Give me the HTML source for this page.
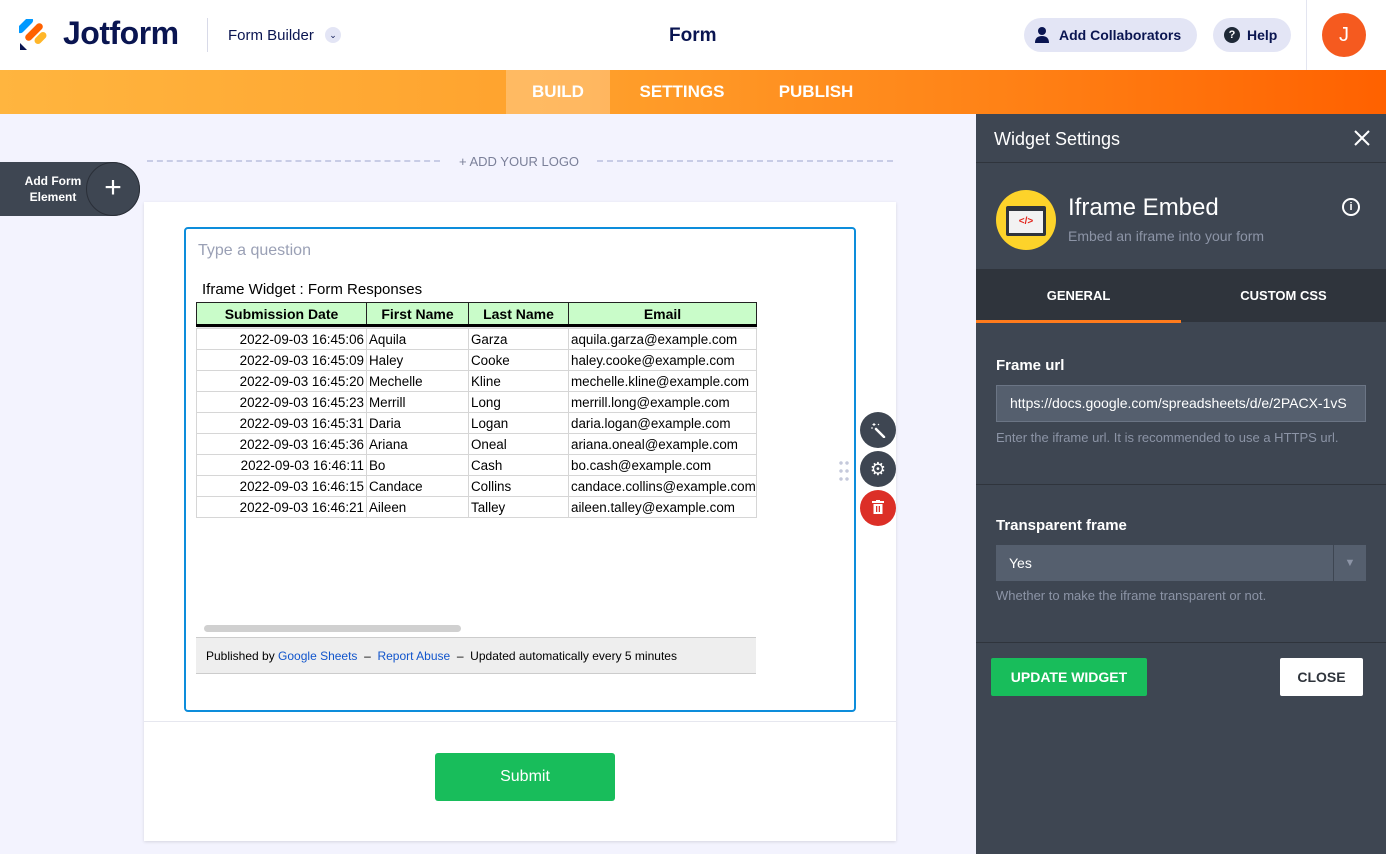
<!DOCTYPE html>
<html><head><meta charset="utf-8"><style>
*{box-sizing:border-box;margin:0;padding:0}
body{width:1386px;height:854px;overflow:hidden;font-family:"Liberation Sans",sans-serif;background:#f3f3fe;position:relative}
.abs{position:absolute}
#top{left:0;top:0;width:1386px;height:70px;background:#fff}
#bar{left:0;top:70px;width:1386px;height:44px;background:linear-gradient(90deg,#ffb53f 0%,#ffa22d 40%,#ff7f14 75%,#ff6100 100%)}
.tab{top:70px;height:44px;line-height:44px;color:#fff;font-size:17px;font-weight:bold;text-align:center}
#panel{left:976px;top:114px;width:410px;height:740px;background:#3e4652;color:#fff}
table{border-collapse:collapse;font-size:13.4px;color:#000;table-layout:fixed}
td{border:1px solid #d6d6d6;height:21px;padding:0 2px;white-space:nowrap;overflow:hidden}
td.d{text-align:right}
th{background:#c9fcc9;border:1px solid #222;border-bottom:3px solid #000;height:23px;font-size:14px}
</style></head><body>
<div id="top" class="abs"></div>
<svg class="abs" style="left:19px;top:19px" width="30" height="32" viewBox="0 0 30 32">
<rect x="2.5" y="-4" width="7" height="20" rx="3.5" fill="#0099ff" transform="rotate(45 6 6)"/>
<rect x="11.5" y="2" width="7" height="22" rx="3.5" fill="#ff6100" transform="rotate(45 15 13)"/>
<rect x="18" y="12" width="7" height="14" rx="3.5" fill="#ffb629" transform="rotate(45 21.5 19)"/>
<path d="M1 24 L1 31 L8 31Z" fill="#0a1551"/></svg>
<div class="abs" style="left:63px;top:15px;font-size:32px;font-weight:bold;color:#0a1551;letter-spacing:-0.5px">Jotform</div>
<div class="abs" style="left:207px;top:18px;width:1px;height:34px;background:#d8dae8"></div>
<div class="abs" style="left:228px;top:27px;font-size:15px;color:#0a1551">Form Builder</div>
<div class="abs" style="left:325px;top:27px;width:16px;height:16px;border-radius:50%;background:#e3e5f5;font-size:9px;text-align:center;line-height:16px;color:#0a1551">⌄</div>
<div class="abs" style="left:669px;top:25px;font-size:19px;color:#0a1551;font-weight:bold">Form</div>
<div class="abs" style="left:1024px;top:18px;width:173px;height:34px;border-radius:17px;background:#e3e5f5;color:#0a1551;font-size:14px;font-weight:bold;line-height:34px;padding-left:35px">Add Collaborators</div>
<svg class="abs" style="left:1035px;top:27px" width="14" height="16" viewBox="0 0 14 16"><circle cx="7" cy="4" r="4" fill="#0a1551"/><path d="M0 16 Q0 9 7 9 Q14 9 14 16Z" fill="#0a1551"/></svg>
<div class="abs" style="left:1213px;top:18px;width:78px;height:34px;border-radius:17px;background:#e3e5f5;color:#0a1551;font-size:14px;font-weight:bold;line-height:34px;padding-left:34px">Help</div>
<div class="abs" style="left:1224px;top:27px;width:16px;height:16px;border-radius:50%;background:#1f2937;color:#fff;font-size:11px;font-weight:bold;text-align:center;line-height:16px">?</div>
<div class="abs" style="left:1306px;top:0;width:1px;height:70px;background:#e3e5f0"></div>
<div class="abs" style="left:1322px;top:13px;width:44px;height:44px;border-radius:50%;background:#f55a1f;color:#fff;font-size:20px;text-align:center;line-height:44px">J</div>
<div id="bar" class="abs"></div>
<div class="tab abs" style="left:506px;width:104px;background:rgba(255,255,255,.25)">BUILD</div>
<div class="tab abs" style="left:626px;width:112px">SETTINGS</div>
<div class="tab abs" style="left:766px;width:100px">PUBLISH</div>

<div class="abs" style="left:0;top:162px;width:140px;height:54px;background:#3e4652;border-radius:0 27px 27px 0"></div>
<div class="abs" style="left:20px;top:173px;width:66px;color:#fff;font-size:12px;text-align:center;line-height:16px;font-weight:bold">Add Form Element</div>
<div class="abs" style="left:86px;top:162px;width:54px;height:54px;border-radius:50%;border:1px solid #2a2f38;color:#fff;font-size:30px;text-align:center;line-height:50px;font-weight:300">+</div>
<div class="abs" style="left:147px;top:160px;width:293px;border-top:2px dashed #c8cce6"></div>
<div class="abs" style="left:597px;top:160px;width:296px;border-top:2px dashed #c8cce6"></div>
<div class="abs" style="left:459px;top:154px;font-size:13px;color:#7b8099">+ ADD YOUR LOGO</div>

<div class="abs" style="left:144px;top:202px;width:752px;height:639px;background:#fff;box-shadow:0 1px 3px rgba(0,0,0,.12)"></div>
<div class="abs" style="left:144px;top:721px;width:752px;height:1px;background:#e6e7ef"></div>
<div class="abs" style="left:184px;top:227px;width:672px;height:485px;border:2px solid #0d8ddb;border-radius:4px"></div>
<div class="abs" style="left:198px;top:242px;font-size:16px;color:#9aa0b5">Type a question</div>
<div class="abs" style="left:202px;top:281px;font-size:15px;color:#000">Iframe Widget : Form Responses</div>
<table class="abs" style="left:196px;top:302px;width:560px">
<colgroup><col style="width:170px"><col style="width:102px"><col style="width:100px"><col style="width:188px"></colgroup>
<tr><th>Submission Date</th><th>First Name</th><th>Last Name</th><th>Email</th></tr>
<tr><td style="height:3px;border:0;background:#e4e4e4" colspan="4"></td></tr>
<tr><td class="d">2022-09-03 16:45:06</td><td>Aquila</td><td>Garza</td><td>aquila.garza@example.com</td></tr>
<tr><td class="d">2022-09-03 16:45:09</td><td>Haley</td><td>Cooke</td><td>haley.cooke@example.com</td></tr>
<tr><td class="d">2022-09-03 16:45:20</td><td>Mechelle</td><td>Kline</td><td>mechelle.kline@example.com</td></tr>
<tr><td class="d">2022-09-03 16:45:23</td><td>Merrill</td><td>Long</td><td>merrill.long@example.com</td></tr>
<tr><td class="d">2022-09-03 16:45:31</td><td>Daria</td><td>Logan</td><td>daria.logan@example.com</td></tr>
<tr><td class="d">2022-09-03 16:45:36</td><td>Ariana</td><td>Oneal</td><td>ariana.oneal@example.com</td></tr>
<tr><td class="d">2022-09-03 16:46:11</td><td>Bo</td><td>Cash</td><td>bo.cash@example.com</td></tr>
<tr><td class="d">2022-09-03 16:46:15</td><td>Candace</td><td>Collins</td><td>candace.collins@example.com</td></tr>
<tr><td class="d">2022-09-03 16:46:21</td><td>Aileen</td><td>Talley</td><td>aileen.talley@example.com</td></tr>
</table>
<div class="abs" style="left:204px;top:625px;width:257px;height:7px;border-radius:4px;background:#d0d0d0"></div>
<div class="abs" style="left:196px;top:637px;width:560px;height:37px;background:#eee;border-top:1px solid #ccc;border-bottom:1px solid #ccc;font-size:12px;line-height:36px;padding-left:10px;color:#000">Published by <span style="color:#1155cc">Google Sheets</span> &nbsp;–&nbsp; <span style="color:#1155cc">Report Abuse</span> &nbsp;–&nbsp; Updated automatically every 5 minutes</div>
<div class="abs" style="left:838px;top:459px;width:12px;height:24px;background:radial-gradient(circle,#c5c9db 1.5px,transparent 2px) 0 0/6px 8px"></div>
<div class="abs" style="left:860px;top:412px;width:36px;height:36px;border-radius:50%;background:#3e4652"></div>
<svg class="abs" style="left:870px;top:422px" width="16" height="16" viewBox="0 0 16 16"><path d="M6 7 L14 15" stroke="#fff" stroke-width="2.5" stroke-linecap="round"/><path d="M4 1v3M2.5 2.5h3M1 6h2M8 3l1-1" stroke="#fff" stroke-width="1"/></svg>
<div class="abs" style="left:860px;top:451px;width:36px;height:36px;border-radius:50%;background:#3e4652;color:#fff;text-align:center;line-height:36px;font-size:18px">⚙</div>
<div class="abs" style="left:860px;top:490px;width:36px;height:36px;border-radius:50%;background:#dc2f27"></div>
<svg class="abs" style="left:872px;top:500px" width="12" height="14" viewBox="0 0 12 14"><rect x="0" y="1" width="12" height="2" fill="#fff"/><rect x="4" y="0" width="4" height="2" fill="#fff"/><path d="M1.5 4h9v10h-9z" fill="#fff"/><rect x="4" y="6" width="1.3" height="6" fill="#dc2f27"/><rect x="6.7" y="6" width="1.3" height="6" fill="#dc2f27"/></svg>
<div class="abs" style="left:435px;top:753px;width:180px;height:48px;border-radius:3px;background:#18bd5b;color:#fff;font-size:16px;text-align:center;line-height:48px">Submit</div>

<div id="panel" class="abs">
<div class="abs" style="left:18px;top:15px;font-size:18px">Widget Settings</div>
<svg class="abs" style="left:378px;top:16px" width="16" height="16" viewBox="0 0 16 16"><path d="M1 1L15 15M15 1L1 15" stroke="#fff" stroke-width="2"/></svg>
<div class="abs" style="left:0;top:48px;width:410px;height:1px;background:#2f343c"></div>
<div class="abs" style="left:20px;top:76px;width:60px;height:60px;border-radius:50%;background:#fdd32a"></div>
<div class="abs" style="left:30px;top:92px;width:40px;height:30px;background:#2f343c;border-radius:2px"></div>
<div class="abs" style="left:33px;top:97px;width:34px;height:22px;background:#f2f2f2;color:#e2231a;font-size:10px;font-weight:bold;text-align:center;line-height:22px">&lt;/&gt;</div>
<div class="abs" style="left:92px;top:80px;font-size:24px">Iframe Embed</div>
<div class="abs" style="left:92px;top:114px;font-size:14px;color:#8c94a6">Embed an iframe into your form</div>
<div class="abs" style="left:366px;top:84px;width:18px;height:18px;border-radius:50%;border:2px solid #fff;font-size:11px;font-weight:bold;text-align:center;line-height:14px">i</div>
<div class="abs" style="left:0;top:155px;width:410px;height:53px;background:#2f343c"></div>
<div class="abs" style="left:0;top:155px;width:205px;height:53px;font-size:13px;font-weight:bold;text-align:center;line-height:53px">GENERAL</div>
<div class="abs" style="left:205px;top:155px;width:205px;height:53px;font-size:13px;font-weight:bold;text-align:center;line-height:53px">CUSTOM CSS</div>
<div class="abs" style="left:0;top:206px;width:205px;height:3px;background:#ff7b1c"></div>
<div class="abs" style="left:20px;top:243px;font-size:15px;font-weight:bold">Frame url</div>
<div class="abs" style="left:20px;top:271px;width:370px;height:37px;background:#555f6e;border:1px solid #6b7585;font-size:14px;line-height:35px;padding-left:13px;overflow:hidden;white-space:nowrap">https://docs.google.com/spreadsheets/d/e/2PACX-1vS</div>
<div class="abs" style="left:20px;top:316px;font-size:13px;color:#8c94a6">Enter the iframe url. It is recommended to use a HTTPS url.</div>
<div class="abs" style="left:0;top:370px;width:410px;height:1px;background:#2f343c"></div>
<div class="abs" style="left:20px;top:403px;font-size:15px;font-weight:bold">Transparent frame</div>
<div class="abs" style="left:20px;top:431px;width:370px;height:36px;background:#555f6e;font-size:14px;line-height:36px;padding-left:13px">Yes</div>
<div class="abs" style="left:357px;top:431px;width:33px;height:36px;border-left:1px solid #3e4652;color:#8c94a6;font-size:11px;text-align:center;line-height:36px">▼</div>
<div class="abs" style="left:20px;top:474px;font-size:13px;color:#8c94a6">Whether to make the iframe transparent or not.</div>
<div class="abs" style="left:0;top:528px;width:410px;height:1px;background:#2f343c"></div>
<div class="abs" style="left:15px;top:544px;width:156px;height:38px;background:#18bd5b;border-radius:2px;font-size:14px;font-weight:bold;text-align:center;line-height:38px">UPDATE WIDGET</div>
<div class="abs" style="left:304px;top:544px;width:83px;height:38px;background:#fff;border-radius:2px;color:#2f343c;font-size:14px;font-weight:bold;text-align:center;line-height:38px">CLOSE</div>
</div>
</body></html>
